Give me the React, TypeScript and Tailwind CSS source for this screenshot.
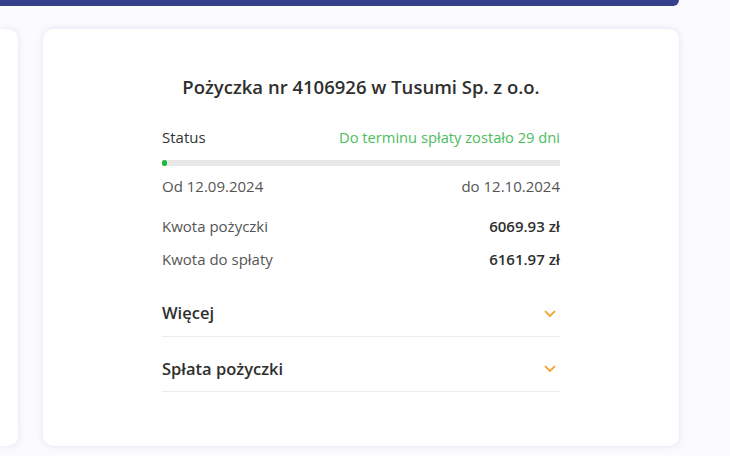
import React from "react";

function Chevron() {
  return (
    <svg width="12" height="8" viewBox="0 0 12 8" fill="none">
      <path d="M1.5 1.5 L6 6 L10.5 1.5" stroke="#f2a93b" strokeWidth="1.8" strokeLinecap="round" strokeLinejoin="round" />
    </svg>
  );
}

export default function App() {
  return (
    <div className="w-[730px] h-[456px] bg-[#fbfbfe] overflow-hidden" style={{ fontFamily: '"Open Sans", "Liberation Sans", sans-serif' }}>
      <div className="w-[679px] h-[6px] bg-[#363f8c] rounded-br-[8px]" />
      <div className="flex gap-[25px] mt-[23px]">
        <div className="w-[18px] h-[417px] bg-white rounded-r-[10px] shadow-[0_0_7px_rgba(120,120,200,0.2)]" />
        <div className="w-[636px] h-[417px] bg-white rounded-[10px] shadow-[0_0_7px_rgba(120,120,200,0.2)] px-[119px] pt-[46px]">
          <h1 className="text-center text-[18.5px] font-semibold text-[#2f2f2f] leading-[24px]">
            Pożyczka nr 4106926 w Tusumi Sp. z o.o.
          </h1>
          <div className="flex justify-between mt-[28px] text-[15px] leading-[20px]">
            <span className="text-[#333]">Status</span>
            <span className="text-[#4cbd5d] text-[14.7px]">Do terminu spłaty zostało 29 dni</span>
          </div>
          <div className="mt-[13px] h-[6px] bg-[#e7e7e7] relative">
            <div className="absolute left-0 top-0 h-[6px] w-[5px] rounded-full bg-[#1eb83a]" />
          </div>
          <div className="flex justify-between mt-[10px] text-[15px] leading-[20px] text-[#555]">
            <span>Od 12.09.2024</span>
            <span>do 12.10.2024</span>
          </div>
          <div className="flex justify-between mt-[20px] text-[15px] leading-[20px]">
            <span className="text-[#555]">Kwota pożyczki</span>
            <span className="text-[#2f2f2f] font-semibold">6069.93 zł</span>
          </div>
          <div className="flex justify-between mt-[13px] text-[15px] leading-[20px]">
            <span className="text-[#555]">Kwota do spłaty</span>
            <span className="text-[#2f2f2f] font-semibold">6161.97 zł</span>
          </div>
          <div className="flex justify-between items-center mt-[20px] h-[48px] pt-[2px] border-b border-[#ececec]">
            <span className="text-[16.5px] font-semibold text-[#2f2f2f]">Więcej</span>
            <span className="mr-[4px]"><Chevron /></span>
          </div>
          <div className="flex justify-between items-center h-[55px] pt-[10px] border-b border-[#ececec]">
            <span className="text-[16.5px] font-semibold text-[#2f2f2f]">Spłata pożyczki</span>
            <span className="mr-[4px]"><Chevron /></span>
          </div>
        </div>
      </div>
    </div>
  );
}
